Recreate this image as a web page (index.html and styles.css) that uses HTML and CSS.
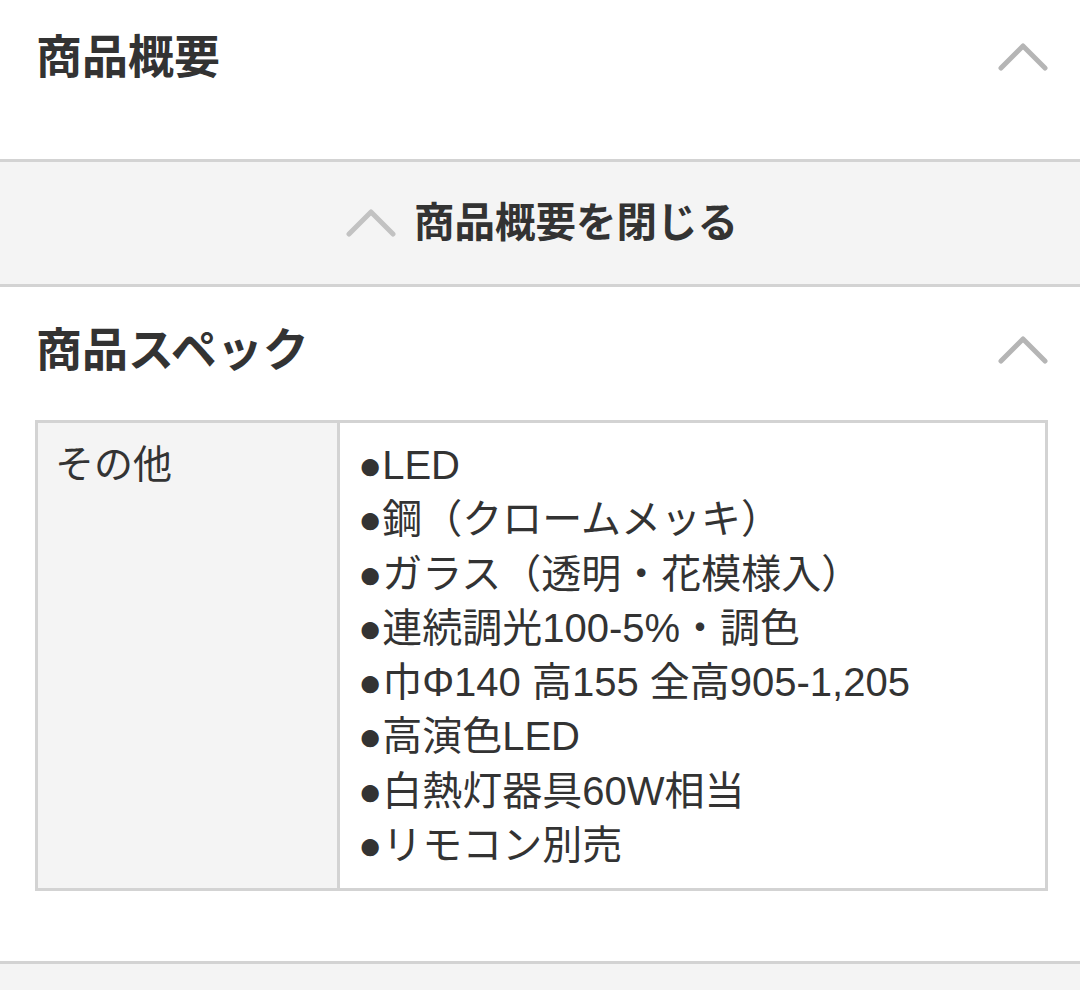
FILE: index.html
```html
<!DOCTYPE html>
<html lang="ja">
<head>
<meta charset="utf-8">
<title>商品概要</title>
<link rel="stylesheet" href="styles.css">
</head>
<body>
<section class="summary">
  <div class="head">
    <h2 class="title">商品概要</h2>
    <svg class="chev" viewBox="0 0 50 30" aria-hidden="true"><path d="M3 26 L25 4 L47 26"/></svg>
  </div>
</section>
<div class="close-bar">
  <svg class="chev chev-light" viewBox="0 0 50 30" aria-hidden="true"><path d="M3 26 L25 4 L47 26"/></svg>
  <span class="close-text">商品概要を閉じる</span>
</div>
<section class="spec">
  <div class="head head-spec">
    <h2 class="title">商品スペック</h2>
    <svg class="chev" viewBox="0 0 50 30" aria-hidden="true"><path d="M3 26 L25 4 L47 26"/></svg>
  </div>
  <div class="table">
    <div class="th">その他</div>
    <div class="td">
      <div>●LED</div>
      <div>●鋼（クロームメッキ）</div>
      <div>●ガラス（透明・花模様入）</div>
      <div>●連続調光100-5%・調色</div>
      <div>●巾Φ140 高155 全高905-1,205</div>
      <div>●高演色LED</div>
      <div>●白熱灯器具60W相当</div>
      <div>●リモコン別売</div>
    </div>
  </div>
</section>
<div class="footer-bar"></div>
</body>
</html>
```
FILE: styles.css
```css
html, body {
  margin: 0;
  padding: 0;
  background: #ffffff;
}
body {
  width: 1080px;
  height: 990px;
  overflow: hidden;
  font-family: "Liberation Sans", "Noto Sans CJK JP", sans-serif;
  color: #333333;
}
.summary {
  height: 159px;
  border-bottom: 3px solid #d3d3d3;
  box-sizing: content-box;
}
.head {
  display: flex;
  align-items: center;
  justify-content: space-between;
  padding: 34px 32px 0 36px;
}
.title {
  margin: 0;
  font-size: 46px;
  line-height: 46px;
  font-weight: 700;
  color: #333333;
}
.chev {
  width: 50px;
  height: 30px;
  fill: none;
  stroke: #b5b5b5;
  stroke-width: 5;
  stroke-linecap: round;
  stroke-linejoin: round;
}
.chev-light {
  stroke: #c2c2c2;
}
.close-bar {
  height: 122px;
  background: #f4f4f4;
  border-bottom: 3px solid #d3d3d3;
  display: flex;
  align-items: center;
  justify-content: center;
  gap: 18px;
  padding-left: 4px;
}
.close-text {
  font-size: 40.5px;
  font-weight: 700;
  line-height: 40px;
  color: #333333;
}
.spec {
  padding-bottom: 70px;
}
.head-spec {
  padding-top: 40px;
}
.table {
  margin: 47px 32px 0 35px;
  border: 3px solid #d3d3d3;
  display: grid;
  grid-template-columns: 302px 1fr;
}
.th {
  background: #f4f4f4;
  border-right: 3px solid #d3d3d3;
  padding: 15px 0 0 17px;
  font-size: 39px;
  line-height: 54.3px;
}
.td {
  padding: 15px 0 16px 18px;
  font-size: 40px;
  line-height: 54.3px;
}
.footer-bar {
  border-top: 3px solid #d3d3d3;
  background: #f4f4f4;
  height: 40px;
}
```
